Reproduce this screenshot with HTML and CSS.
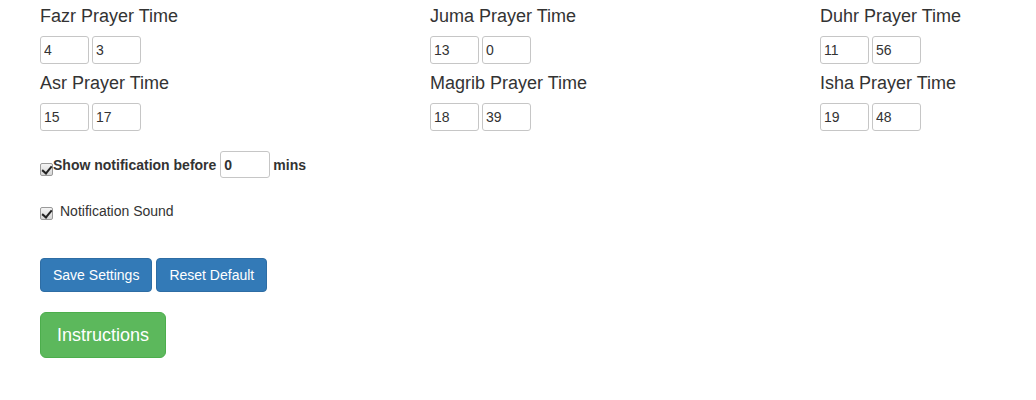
FILE: index.html
```html
<!DOCTYPE html>
<html>
<head>
<meta charset="utf-8">
<link rel="stylesheet" href="styles.css">
</head>
<body>
<div class="page">
  <div class="times">
    <div class="field"><h4>Fazr Prayer Time</h4><div class="pair"><input class="tin" value="4"><input class="tin" value="3"></div></div>
    <div class="field"><h4>Juma Prayer Time</h4><div class="pair"><input class="tin" value="13"><input class="tin" value="0"></div></div>
    <div class="field"><h4>Duhr Prayer Time</h4><div class="pair"><input class="tin" value="11"><input class="tin" value="56"></div></div>
    <div class="field"><h4>Asr Prayer Time</h4><div class="pair"><input class="tin" value="15"><input class="tin" value="17"></div></div>
    <div class="field"><h4>Magrib Prayer Time</h4><div class="pair"><input class="tin" value="18"><input class="tin" value="39"></div></div>
    <div class="field"><h4>Isha Prayer Time</h4><div class="pair"><input class="tin" value="19"><input class="tin" value="48"></div></div>
  </div>

  <div class="notify">
    <input type="checkbox" class="cb cb-notify" checked>
    <span class="bold">Show notification before</span>
    <input class="min-input" value="0">
    <span class="bold mins">mins</span>
  </div>

  <div class="sound">
    <input type="checkbox" class="cb cb-sound" checked>
    <span class="sound-label">Notification Sound</span>
  </div>

  <div class="actions">
    <button class="btn btn-primary">Save Settings</button>
    <button class="btn btn-primary">Reset Default</button>
  </div>

  <div class="instr">
    <button class="btn btn-success btn-lg">Instructions</button>
  </div>
</div>
</body>
</html>
```

FILE: styles.css
```css
html, body {
  margin: 0;
  padding: 0;
  background: #fff;
}
body {
  font-family: "Liberation Sans", Arial, Helvetica, sans-serif;
  font-size: 14px;
  line-height: 20px;
  color: #333;
}
.page {
  padding: 0 0 0 40px;
}
.times {
  display: grid;
  grid-template-columns: 390px 390px 1fr;
  padding-top: 6px;
}
.field h4 {
  font-size: 18px;
  font-weight: 400;
  line-height: 20px;
  margin: 0 0 10px;
  white-space: nowrap;
}
.field:nth-child(n+4) h4 {
  margin-top: 9px;
}
.pair {
  display: flex;
  gap: 3px;
}
.tin, .min-input {
  box-sizing: border-box;
  width: 49px;
  height: 28px;
  border: 1px solid #c6c6c6;
  border-radius: 3px;
  padding: 0 0 0 3px;
  margin: 0;
  font-family: "Liberation Sans", Arial, sans-serif;
  font-size: 14px;
  color: #333;
  background: #fff;
  outline: none;
}
.notify {
  display: flex;
  align-items: center;
  margin-top: 20px;
  height: 27px;
}
.bold {
  font-weight: 700;
}
.min-input {
  width: 50px;
  height: 27px;
  margin-left: 4px;
  font-weight: 700;
}
.mins {
  margin-left: 3px;
}
.cb {
  -webkit-appearance: none;
  appearance: none;
  box-sizing: border-box;
  width: 13px;
  height: 13px;
  margin: 0;
  border: 1px solid #9a9a9a;
  border-radius: 2px;
  background: linear-gradient(#f4f4f4, #d6d6d6);
  position: relative;
  flex: none;
}
.cb::after {
  content: "";
  position: absolute;
  left: 3px;
  top: 0px;
  width: 4px;
  height: 8px;
  border: solid #222;
  border-width: 0 2.5px 2.5px 0;
  transform: rotate(40deg);
}
.cb-notify {
  align-self: flex-start;
  margin-top: 12px;
}
.sound {
  display: flex;
  align-items: flex-start;
  margin-top: 23px;
  height: 20px;
}
.cb-sound {
  margin-top: 6px;
}
.sound-label {
  margin-left: 7px;
}
.actions {
  display: flex;
  gap: 4px;
  margin-top: 37px;
}
.btn {
  font-family: "Liberation Sans", Arial, sans-serif;
  font-size: 14px;
  line-height: 20px;
  padding: 6px 12px;
  border: 1px solid transparent;
  border-radius: 4px;
  color: #fff;
  cursor: pointer;
  margin: 0;
}
.btn-primary {
  background: #337ab7;
  border-color: #2e6da4;
}
.instr {
  margin-top: 20px;
}
.btn-success {
  background: #5cb85c;
  border-color: #4cae4c;
}
.btn-lg {
  font-size: 18px;
  line-height: 24px;
  padding: 10px 16px;
  border-radius: 6px;
}
```
